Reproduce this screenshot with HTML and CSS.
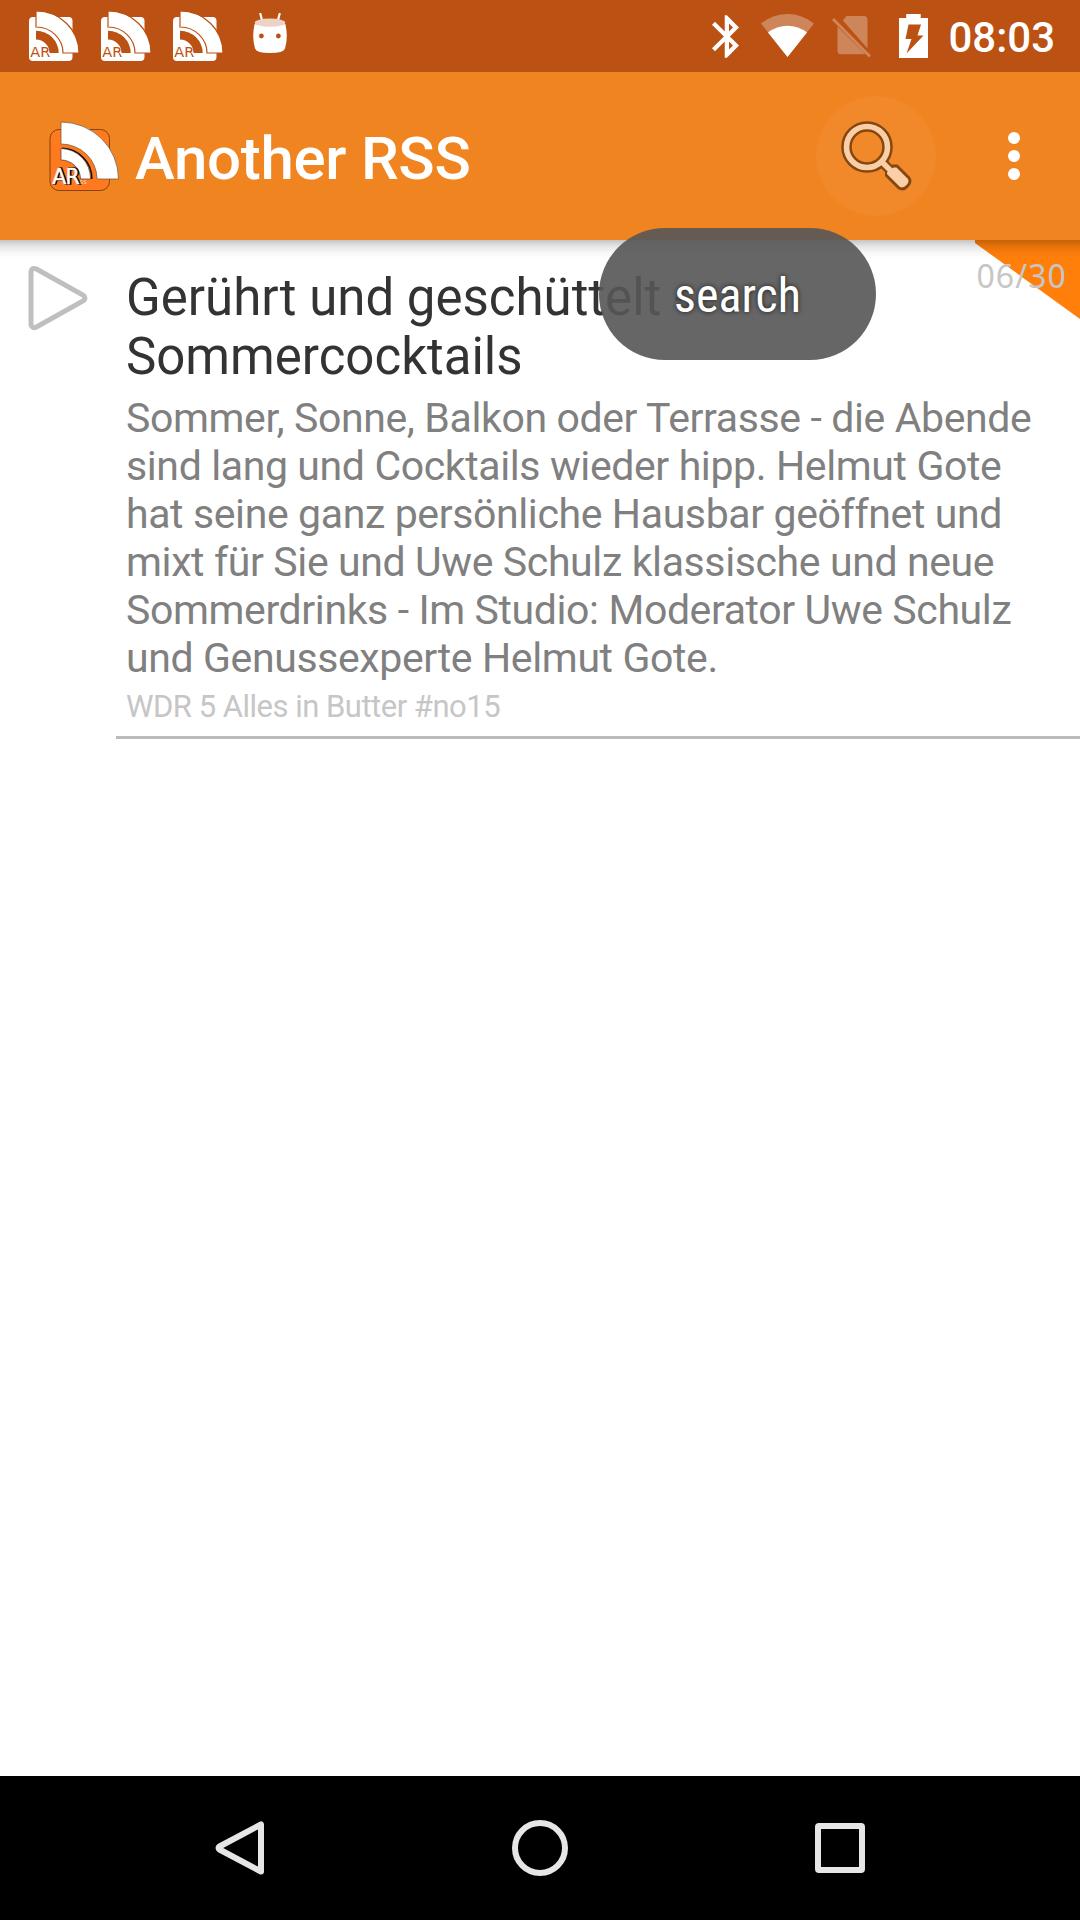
FILE: index.html
```html
<!DOCTYPE html>
<html lang="de">
<head>
<meta charset="utf-8">
<title>Another RSS</title>
<link rel="stylesheet" href="styles.css">
</head>
<body>
<header class="status-bar">
  <div class="notifications">
    <svg width="50" height="50" viewBox="0 0 50 50">
      <rect x="0" y="6" width="43.5" height="44" rx="4" fill="#fff"/>
      <path class="note-arc" d="M7 0A43 42 0 0 1 50 42H34A27 26 0 0 0 7 16Z"/>
      <path class="note-band" d="M7 19.8A22.7 22.2 0 0 1 29.7 42H20.5A13.5 13.6 0 0 0 7 28.4Z"/>
      <text x="1.3" y="46" class="note-label">AR</text>
    </svg>
    <svg width="50" height="50" viewBox="0 0 50 50">
      <rect x="0" y="6" width="43.5" height="44" rx="4" fill="#fff"/>
      <path class="note-arc" d="M7 0A43 42 0 0 1 50 42H34A27 26 0 0 0 7 16Z"/>
      <path class="note-band" d="M7 19.8A22.7 22.2 0 0 1 29.7 42H20.5A13.5 13.6 0 0 0 7 28.4Z"/>
      <text x="1.3" y="46" class="note-label">AR</text>
    </svg>
    <svg width="50" height="50" viewBox="0 0 50 50">
      <rect x="0" y="6" width="43.5" height="44" rx="4" fill="#fff"/>
      <path class="note-arc" d="M7 0A43 42 0 0 1 50 42H34A27 26 0 0 0 7 16Z"/>
      <path class="note-band" d="M7 19.8A22.7 22.2 0 0 1 29.7 42H20.5A13.5 13.6 0 0 0 7 28.4Z"/>
      <text x="1.3" y="46" class="note-label">AR</text>
    </svg>
    <svg class="droid" width="34" height="40" viewBox="0 0 34 40">
      <path d="M7.4 1L9.5 9M26.6 1L24.5 9" stroke="#fff" stroke-width="2.2" stroke-linecap="round"/>
      <path d="M1.6 11Q17 15 32.4 11Q35.4 24 32 35.500Q30.500 40 17 40Q3.500 40 2 35.500Q-1.400 24 1.600 11Z" fill="#fff"/>
      <ellipse cx="17" cy="9.700" rx="15.300" ry="4.100" fill="#ecd3c5"/>
      <circle cx="8.400" cy="23" r="2.400" fill="#bb5113"/><circle cx="25.400" cy="23" r="2.400" fill="#bb5113"/>
    </svg>
  </div>
  <div class="system-icons">
    <svg width="27" height="43" viewBox="5 2 12.710 20" fill="#fff"><path d="M17.710 7.710L12 2h-1v7.590L6.410 5 5 6.410 10.590 12 5 17.590 6.410 19 11 14.410V22h1l5.710-5.710-4.300-4.290 4.300-4.290zM13 5.830l1.880 1.880L13 9.590V5.830zm1.880 10.460L13 18.170v-3.760l1.880 1.880z"/></svg>
    <svg class="wifi" width="53" height="43" viewBox="0 0 53 43"><path d="M0 9.500Q12 0 26.500 0T53 9.500L26.500 43Z" fill="#fff" opacity=".3"/><path d="M7 18.500Q16 11.800 26.500 11.800T46 18.500L26.500 43Z" fill="#fff"/></svg>
    <svg class="sim" width="39" height="43" viewBox="0 0 39 43">
      <path d="M14.500 1H32Q35.500 1 35.500 4.500V33.500L10.900 5.500Z M5.500 11.500L33.500 39.300H8.500Q5.500 39 5.500 36Z" fill="#fff" opacity=".3"/>
      <path d="M1 4L38 41.500" stroke="#fff" stroke-width="2.800" opacity=".3"/>
    </svg>
    <svg class="battery" width="29" height="44" viewBox="0 0 29 44"><path d="M7.200 0H21.700V4H29V44H0V4H7.200Z" fill="#fff"/><path d="M9.500 10.500H22L18.500 21.500H24.500L7.500 39.500L12.500 25H6.500Z" fill="#bb5113"/></svg>
    <time class="clock">08:03</time>
  </div>
</header>

<div class="app-bar">
  <svg class="logo" width="72" height="72" viewBox="0 0 72 72">
    <rect x="2" y="9.500" width="59.500" height="61" rx="9" fill="#ff7a1f" stroke="#84430f"/>
    <path d="M13 2A57.500 57 0 0 1 70.500 59H49A36 35 0 0 0 13 24Z" fill="#fff" stroke="#7d5a3c" stroke-width=".8"/>
    <path d="M14 28.300A30.700 30.700 0 0 1 43.900 59" fill="none" stroke="#111" stroke-width="1.500"/>
    <path d="M13 28.500A30 30 0 0 1 42.500 59H32.500A19.500 19 0 0 0 13 40Z" fill="#fff" stroke="#533" stroke-width=".7"/>
    <text x="5.300" y="64.300" class="logo-shadow">AR</text>
    <text x="4.300" y="63.500" class="logo-label">AR</text>
    <text x="31.500" y="63.500" class="logo-small">ss</text>
  </svg>
  <h1 class="app-title">Another RSS</h1>
  <button class="search" aria-label="search">
    <svg width="72" height="72" viewBox="0 0 72 72">
      <g fill="none" stroke="#83470f">
        <circle cx="27" cy="27" r="20.500" stroke-width="10.500"/>
        <path d="M41 41L49 49" stroke-width="10"/>
        <path d="M46.500 50.500Q48 49 47.500 47.500L53.500 46H57L69 58Q71.500 62 67.500 66Q63.500 70.500 59 68L46.500 55.500Z" fill="#83470f" stroke-width="3" stroke-linejoin="round"/>
      </g>
      <circle cx="27" cy="27" r="20.500" fill="none" stroke="#facfa8" stroke-width="5.600"/>
      <path d="M41.500 41.500L51 51" stroke="#facfa8" stroke-width="5.500"/>
      <path d="M47 52.500L53.500 47.500H56.500L68 59Q69.500 62 66.500 65Q63.500 68.500 60 67L47 54Z" fill="#facfa8"/>
    </svg>
  </button>
  <svg class="overflow" width="12" height="48" viewBox="0 0 12 48" fill="#fff"><circle cx="6" cy="6" r="6"/><circle cx="6" cy="24" r="6"/><circle cx="6" cy="42" r="6"/></svg>
</div>

<main class="feed">
  <article class="entry">
    <svg class="play" width="60" height="66" viewBox="0 0 60 66"><path d="M3 6.500V60Q4 64 8.500 62L55 36Q59 33 55 30L8.500 4Q4 2 3 6.500Z" fill="none" stroke="#bfbfbf" stroke-width="5"/></svg>
    <div class="entry-body">
      <h2 class="entry-title">Gerührt und geschüttelt -<br>Sommercocktails</h2>
      <p class="entry-text">Sommer, Sonne, Balkon oder Terrasse - die Abende<br>sind lang und Cocktails wieder hipp. Helmut Gote<br>hat seine ganz persönliche Hausbar geöffnet und<br>mixt für Sie und Uwe Schulz klassische und neue<br>Sommerdrinks - Im Studio: Moderator Uwe Schulz<br>und Genussexperte Helmut Gote.</p>
      <p class="entry-source">WDR 5 Alles in Butter #no15</p>
    </div>
    <svg class="corner" width="105" height="80" viewBox="0 0 105 80"><path d="M0 0H105V79L0 3Z" fill="#ff7f0a"/></svg>
    <time class="entry-date">06/30</time>
  </article>
  <div class="bar-shadow"></div>
</main>

<nav class="nav-bar">
  <svg width="56" height="56" viewBox="0 0 56 56"><path d="M49 4.500V51.500L7.500 29.500Q5.500 28 7.500 26.500Z" fill="none" stroke="#e6e6e6" stroke-width="6" stroke-linejoin="round"/></svg>
  <svg width="56" height="56" viewBox="0 0 56 56"><circle cx="28" cy="28" r="25" fill="none" stroke="#e6e6e6" stroke-width="6"/></svg>
  <svg width="56" height="56" viewBox="0 0 56 56"><rect x="6" y="6" width="44" height="44" rx="1" fill="none" stroke="#e6e6e6" stroke-width="6"/></svg>
</nav>

<div class="toast"><span>search</span></div>
</body>
</html>
```

FILE: styles.css
```css
* { box-sizing: border-box; margin: 0; padding: 0; }

body {
  position: relative;
  display: flex;
  flex-direction: column;
  width: 1080px;
  height: 1920px;
  overflow: hidden;
  background: #fff;
  font-family: Roboto, "Liberation Sans", sans-serif;
}

svg { display: block; flex: none; }

.status-bar {
  display: flex;
  justify-content: space-between;
  height: 72px;
  padding: 0 25px 0 29px;
  background: #bb5113;
  color: #fff;
}

.notifications { display: flex; gap: 22px; padding-top: 11px; }
.droid { margin: 2px 0 0 8px; }
.note-arc { fill: #fff; stroke: #bb5113; stroke-width: 1.2; }
.note-band { fill: #bb5113; }
.note-label { font: 14.5px "DejaVu Sans", sans-serif; fill: #bb5113; }

.system-icons { display: flex; align-items: flex-start; padding-top: 14px; }
.system-icons svg:first-child { margin-top: 1px; }
.wifi { margin-left: 22px; }
.sim { margin: 1px 0 0 18px; }
.battery { margin-left: 28px; }
.clock { margin: -1px 0 0 20px; font-size: 42px; font-weight: 500; line-height: 49px; }

.app-bar {
  display: flex;
  align-items: center;
  height: 168px;
  padding: 0 60px 0 48px;
  background: #f08421;
}

.logo-label, .logo-shadow { font: 20.5px "DejaVu Sans", sans-serif; fill: #fff; letter-spacing: -.8px; }
.logo-label { stroke: #fff; stroke-width: .4; }
.logo-shadow { fill: #000; stroke: #000; stroke-width: 1.5; }
.logo-small { font: 7px "DejaVu Sans", sans-serif; fill: #ffd2b0; }
.app-title {
  margin-left: 15px;
  padding-top: 5px;
  color: #fff;
  font-size: 60px;
  font-weight: 500;
  line-height: 70px;
  letter-spacing: -.3px;
}

.search {
  display: grid;
  place-items: center;
  width: 120px;
  height: 120px;
  margin-left: auto;
  border: 0;
  border-radius: 50%;
  background: #f1882a;
}

.overflow { margin-left: 72px; }

.feed { position: relative; flex: 1; }

.bar-shadow {
  position: absolute;
  inset: 0 0 auto;
  height: 18px;
  background: linear-gradient(rgba(0, 0, 0, .23), rgba(0, 0, 0, .1) 35%, rgba(0, 0, 0, .03) 70%, transparent);
}

.entry { position: relative; display: flex; padding: 25px 0 0 28px; }

.entry-body {
  flex: 1;
  margin-left: 28px;
  padding: 3px 0 5px 10px;
  border-bottom: 3px solid #bbb;
}

.entry-title { color: #333; font-size: 51px; font-weight: 400; line-height: 59px; white-space: nowrap; }
.entry-text {
  margin-top: 8px;
  color: #808080;
  font-size: 41px;
  line-height: 48px;
  letter-spacing: -.38px;
  white-space: nowrap;
}
.entry-source {
  padding-top: 1px;
  color: #c6c6c6;
  font-size: 31px;
  line-height: 48px;
  letter-spacing: -.5px;
  white-space: nowrap;
}

.corner { position: absolute; top: 0; right: 0; }
.entry-date {
  position: absolute;
  top: 15px;
  right: 13px;
  color: #c6c6c6;
  font: 32px/42px "Noto Sans", sans-serif;
  letter-spacing: 1.1px;
}

.nav-bar {
  display: flex;
  align-items: center;
  justify-content: center;
  gap: 244px;
  height: 144px;
  background: #000;
}

.toast {
  position: absolute;
  top: 228px;
  left: 599px;
  display: grid;
  place-items: center;
  width: 277px;
  height: 132px;
  padding-top: 4px;
  border-radius: 66px;
  background: rgba(87, 87, 87, .91);
  color: #fff;
  font: 48px/56px "Roboto Condensed", Roboto, sans-serif;
  text-shadow: 0 0 5px rgba(0, 0, 0, .75);
}
```
